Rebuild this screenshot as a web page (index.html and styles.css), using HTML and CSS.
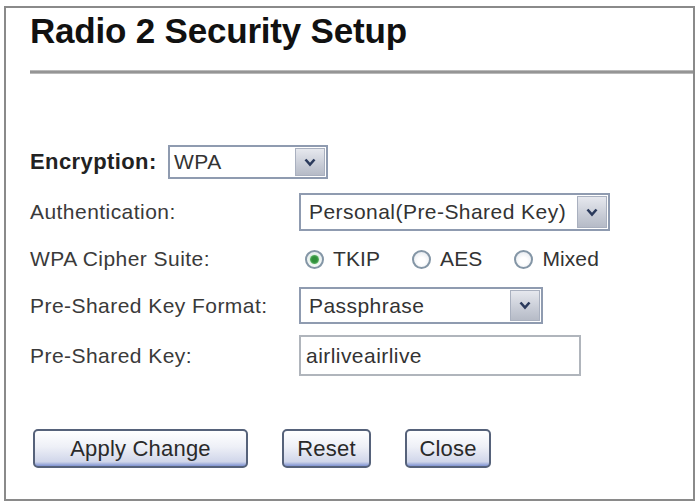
FILE: index.html
```html
<!DOCTYPE html>
<html lang="en">
  <head>
    <meta charset="UTF-8" />
    <title>Radio 2 Security Setup</title>
    <link rel="stylesheet" href="styles.css">
  </head>
  <body>
    <div class="panel">
      <h1 class="title">Radio 2 Security Setup</h1>
      <div class="rule"></div>

      <div class="encryption-row">
        <span class="encryption-label">Encryption:</span>
        <div class="select select-enc">
          <span class="select-text">WPA</span>
          <span class="select-arrow">
            <svg width="12" height="9" viewBox="0 0 12 9"><path d="M1.5 1.5 L6 6.5 L10.5 1.5" fill="none" stroke="#2b3a5c" stroke-width="2.6"/></svg>
          </span>
        </div>
      </div>

      <div class="form-grid">
        <div class="label">Authentication:</div>
        <div class="select select-auth">
          <span class="select-text">Personal(Pre-Shared Key)</span>
          <span class="select-arrow">
            <svg width="12" height="9" viewBox="0 0 12 9"><path d="M1.5 1.5 L6 6.5 L10.5 1.5" fill="none" stroke="#2b3a5c" stroke-width="2.6"/></svg>
          </span>
        </div>

        <div class="label">WPA Cipher Suite:</div>
        <div class="radio-group">
          <label class="radio-item"><span class="radio checked"></span>TKIP</label>
          <label class="radio-item"><span class="radio"></span>AES</label>
          <label class="radio-item"><span class="radio"></span>Mixed</label>
        </div>

        <div class="label">Pre-Shared Key Format:</div>
        <div class="select select-format">
          <span class="select-text">Passphrase</span>
          <span class="select-arrow">
            <svg width="12" height="9" viewBox="0 0 12 9"><path d="M1.5 1.5 L6 6.5 L10.5 1.5" fill="none" stroke="#2b3a5c" stroke-width="2.6"/></svg>
          </span>
        </div>

        <div class="label">Pre-Shared Key:</div>
        <div class="text-input">airliveairlive</div>
      </div>

      <div class="button-row">
        <div class="btn btn-apply">Apply Change</div>
        <div class="btn btn-reset">Reset</div>
        <div class="btn btn-close">Close</div>
      </div>
    </div>
  </body>
</html>
```

FILE: styles.css
```css
* {
  padding: 0;
  margin: 0;
  box-sizing: border-box;
}
html,
body {
  background: #fff;
  overflow: hidden;
}
body {
  font-family: "Liberation Sans", Arial, sans-serif;
  color: #333;
}
.panel {
  margin: 6px 0 0 4px;
  width: 691px;
  height: 495px;
  border: 2px solid #8a8a8a;
  padding-left: 24px;
  padding-top: 3px;
}
.title {
  font-size: 35px;
  line-height: 40px;
  font-weight: bold;
  color: #111;
  letter-spacing: -0.2px;
}
.rule {
  margin-top: 19px;
  height: 4px;
  background: linear-gradient(#cfcfcf, #959595, #959595, #cfcfcf);
}

.encryption-row {
  display: flex;
  align-items: center;
  margin-top: 71px;
  height: 34px;
}
.encryption-label {
  font-size: 22px;
  font-weight: bold;
  color: #222;
  letter-spacing: 0.4px;
  width: 138px;
}

.select {
  display: flex;
  align-items: stretch;
  border: 2px solid #8f9bb0;
  background: #fff;
  font-size: 21px;
  letter-spacing: 0.45px;
  color: #333;
}
.select-text {
  flex: 1;
  display: flex;
  align-items: center;
  padding-left: 8px;
  white-space: nowrap;
}
.select-arrow {
  width: 30px;
  margin: 1px 1px 1px 0;
  display: flex;
  align-items: center;
  justify-content: center;
  background: linear-gradient(#e6e8ee, #c8ccd6 60%, #b6bbc7);
  border: 1px solid #a9b0bf;
}
.select-enc {
  width: 160px;
  height: 34px;
}
.select-enc .select-text {
  padding-left: 4px;
}
.select-auth {
  width: 311px;
  height: 38px;
}
.select-format {
  width: 244px;
  height: 37px;
}

.form-grid {
  display: grid;
  grid-template-columns: 269px auto;
  grid-template-rows: 38px 34px 37px 41px;
  row-gap: 11px;
  margin-top: 14px;
  justify-items: start;
  align-items: center;
}
.label {
  font-size: 21px;
  letter-spacing: 0.45px;
  color: #3a3a3a;
}

.radio-group {
  display: flex;
  gap: 32px;
  padding-left: 6px;
  font-size: 21px;
  letter-spacing: 0.1px;
  color: #333;
}
.radio-item {
  display: flex;
  align-items: center;
  gap: 9px;
}
.radio {
  width: 19px;
  height: 19px;
  border-radius: 50%;
  border: 2px solid #8496a6;
  background: radial-gradient(circle at 50% 60%, #ffffff 30%, #e4e8ee 90%);
  display: flex;
  align-items: center;
  justify-content: center;
}
.radio.checked::after {
  content: "";
  width: 9px;
  height: 9px;
  border-radius: 50%;
  background: radial-gradient(circle, #2f8f3a 40%, #7fcf86 100%);
  box-shadow: 0 0 3px #a9e2ad;
}

.text-input {
  width: 282px;
  height: 41px;
  border: 2px solid #b0b5bc;
  font-size: 21px;
  letter-spacing: 0.45px;
  color: #333;
  display: flex;
  align-items: center;
  padding-left: 5px;
}

.button-row {
  display: flex;
  gap: 34px;
  margin-top: 53px;
  padding-left: 3px;
}
.btn {
  height: 39px;
  border: 2px solid #56627a;
  border-radius: 5px;
  background: linear-gradient(#ffffff, #eef0f7 45%, #d0d6ea 88%, #7f93d2);
  font-size: 22px;
  color: #2a2a2a;
  display: flex;
  align-items: center;
  justify-content: center;
  letter-spacing: 0.2px;
}
.btn-apply {
  width: 215px;
}
.btn-reset {
  width: 89px;
}
.btn-close {
  width: 86px;
}
```
